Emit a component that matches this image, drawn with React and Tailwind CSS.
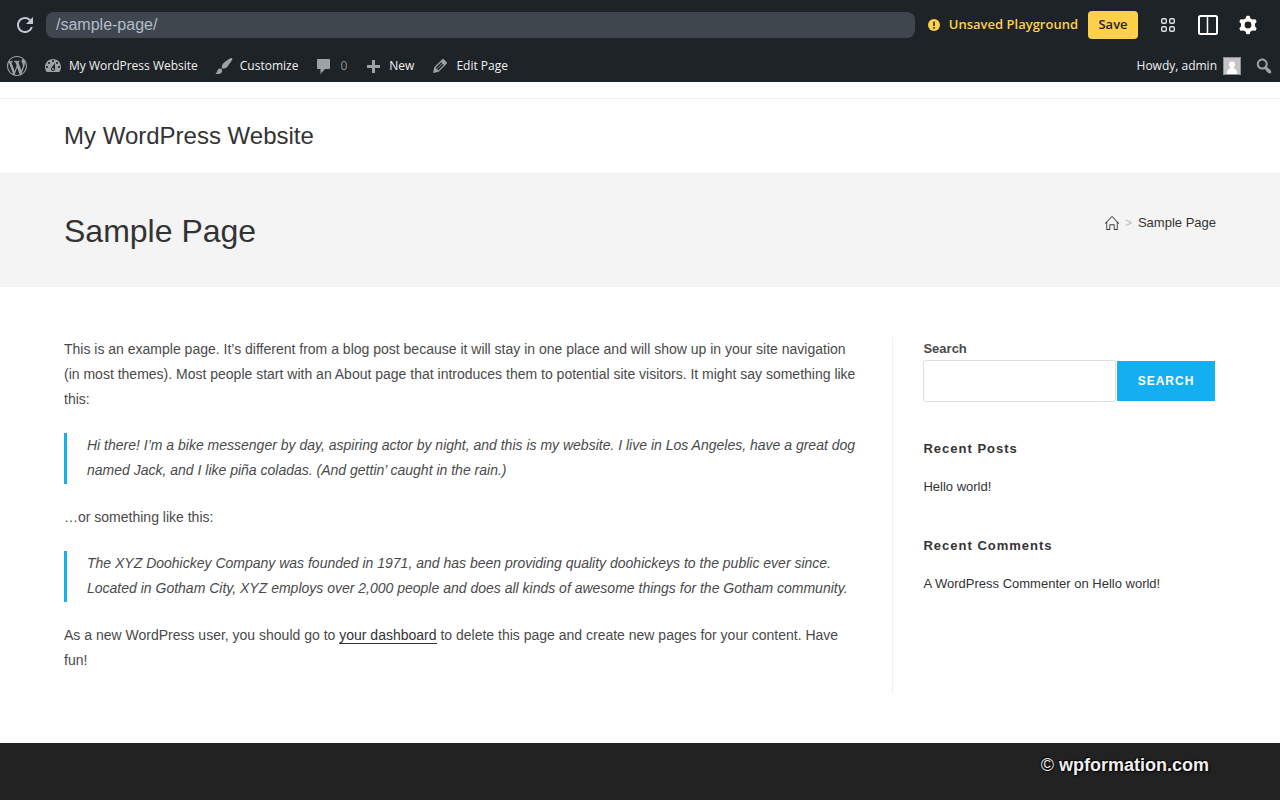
import { useState } from "react";
import { MdRefresh } from "react-icons/md";
import { SlHome } from "react-icons/sl";

const ICONS = {
  wordpress:
    "M20 10c0-5.51-4.49-10-10-10C4.48 0 0 4.49 0 10c0 5.52 4.48 10 10 10 5.51 0 10-4.48 10-10zM7.78 15.37L4.37 6.22c.55-.02 1.17-.08 1.17-.08.5-.06.44-1.13-.06-1.11 0 0-1.45.11-2.37.11-.18 0-.37 0-.58-.01C4.12 2.69 6.87 1.11 10 1.11c2.33 0 4.45.87 6.05 2.34-.68-.11-1.65.39-1.65 1.58 0 .74.45 1.36.9 2.1.35.61.55 1.36.55 2.46 0 1.49-1.4 5-1.4 5l-3.03-8.37c.54-.02.82-.17.82-.17.5-.05.44-1.25-.06-1.22 0 0-1.44.12-2.38.12-.87 0-2.33-.12-2.33-.12-.5-.03-.56 1.2-.06 1.22l.92.08 1.26 3.41zM17.41 10c.24-.64.74-1.87.43-4.25.7 1.29 1.05 2.71 1.05 4.25 0 3.29-1.73 6.24-4.4 7.78.97-2.59 1.94-5.2 2.92-7.78zM6.1 18.09C3.12 16.65 1.11 13.53 1.11 10c0-1.3.23-2.48.72-3.59C3.25 10.3 4.67 14.2 6.1 18.09zm4.03-6.63l2.58 6.98c-.86.29-1.76.45-2.71.45-.79 0-1.57-.11-2.29-.33.81-2.38 1.62-4.74 2.42-7.1z",
  dashboard:
    "M3.76 16h12.48c1.1-1.37 1.76-3.11 1.76-5 0-4.42-3.58-8-8-8s-8 3.58-8 8c0 1.89.66 3.63 1.76 5zM10 4c.55 0 1 .45 1 1s-.45 1-1 1-1-.45-1-1 .45-1 1-1zM6 6c.55 0 1 .45 1 1s-.45 1-1 1-1-.45-1-1 .45-1 1-1zm8 0c.55 0 1 .45 1 1s-.45 1-1 1-1-.45-1-1 .45-1 1-1zm-5.37 5.55L12 7v6c0 1.1-.9 2-2 2s-2-.9-2-2c0-.57.24-1.08.63-1.45zM4 10c.55 0 1 .45 1 1s-.45 1-1 1-1-.45-1-1 .45-1 1-1zm12 0c.55 0 1 .45 1 1s-.45 1-1 1-1-.45-1-1 .45-1 1-1zm-5 3c0-.55-.45-1-1-1s-1 .45-1 1 .45 1 1 1 1-.45 1-1z",
  brush:
    "M18.33 3.57s.27-.8-.31-1.36c-.53-.52-1.22-.24-1.22-.24-.61.3-5.76 3.47-7.67 5.57-.86.96-2.06 3.79-1.09 4.82.92.98 3.96-.17 4.79-1 2.06-2.06 5.21-7.17 5.5-7.79zM1.4 17.65c2.37-1.56 1.46-3.41 3.23-4.64.93-.65 2.22-.62 3.08.29.63.67.8 2.57-.16 3.46-1.57 1.45-4 1.55-6.15.89z",
  comment:
    "M4 3h11c.55 0 1 .45 1 1v8c0 .55-.45 1-1 1h-4l-4.500 5v-5H4c-.55 0-1-.45-1-1V4c0-.55.45-1 1-1z",
  plus: "M17 9v3h-5v5H9v-5H4V9h5V4h3v5h5z",
  edit:
    "M13.89 3.39l2.71 2.72c.46.46.42 1.24.03 1.64l-8.01 8.02-5.56 1.16 1.16-5.58s7.6-7.63 7.99-8.03c.39-.39 1.22-.39 1.68.07zm-2.73 2.79l-5.59 5.61 1.11 1.11 5.54-5.65zm-2.97 8.23l5.58-5.6-1.07-1.08-5.59 5.6z",
  search:
    "M12.14 4.18c1.87 1.87 2.11 4.75.72 6.89.12.1.22.21.36.31.2.16.47.36.81.59.34.24.56.39.66.47.42.31.73.57.94.78.32.32.6.65.84 1 .25.35.44.69.59 1.04.14.35.21.68.18 1-.02.32-.14.59-.36.81s-.49.34-.81.36c-.31.02-.65-.04-.99-.19-.35-.14-.7-.34-1.04-.59-.35-.24-.68-.52-1-.84-.21-.21-.47-.52-.77-.93-.1-.13-.25-.35-.47-.66-.22-.32-.4-.57-.56-.78-.16-.2-.29-.35-.44-.5-2.07 1.09-4.69.76-6.44-.98-2.14-2.15-2.14-5.64 0-7.78 2.15-2.15 5.63-2.15 7.78 0zm-1.41 6.36c1.36-1.37 1.36-3.58 0-4.95-1.37-1.37-3.59-1.37-4.95 0-1.37 1.37-1.37 3.58 0 4.95 1.36 1.37 3.58 1.37 4.95 0z",
};

function AdminIcon({ name }) {
  return (
    <svg
      viewBox="0 0 20 20"
      fill="currentColor"
      aria-hidden="true"
      className="size-5 shrink-0 text-[#9ca2a7]"
    >
      <path d={ICONS[name]} />
    </svg>
  );
}

function GearIcon() {
  return (
    <svg viewBox="0 0 20 20" aria-hidden="true" className="size-5" fill="currentColor">
      <circle cx="10" cy="10" r="5.200" fill="none" stroke="currentColor" strokeWidth="3.600" />
      {[0, 60, 120, 180, 240, 300].map((angle) => (
        <path
          key={angle}
          d="M7.200 4.500L8.300 1.300q.2-.6.800-.6h1.800q.6 0 .8.600l1.100 3.200z"
          transform={`rotate(${angle} 10 10)`}
        />
      ))}
    </svg>
  );
}

function PlaygroundBar() {
  const [path, setPath] = useState("/sample-page/");

  return (
    <div className="flex h-[50px] items-center pr-3 pl-[13px]">
      <button aria-label="Refresh" className="text-[#c0c8d2]">
        <MdRefresh size={24} />
      </button>
      <input
        type="text"
        aria-label="Page path"
        value={path}
        onChange={(e) => setPath(e.target.value)}
        className="ml-[9px] h-[26px] min-w-0 flex-1 rounded-lg bg-[#40464d] px-[10px] font-['Liberation_Sans',Arial,sans-serif] text-base text-[#b1bccb] outline-none"
      />
      <div className="ml-[13px] flex items-center gap-[9px] text-[13px] font-semibold text-[#ffd04a]">
        <svg viewBox="0 0 12 12" aria-hidden="true" className="size-3">
          <circle cx="6" cy="6" r="6" fill="currentColor" />
          <path d="M5 2.500h2v4.500H5zM5 8h2v1.700H5z" fill="#5d5026" />
        </svg>
        <span>Unsaved Playground</span>
      </div>
      <button className="ml-[10px] h-7 w-[50px] rounded bg-[#ffd04a] text-[13px] font-semibold text-[#1e2327]">
        Save
      </button>
      <div className="ml-[10px] flex items-center text-white">
        <button aria-label="Apps" className="flex w-10 justify-center">
          <svg viewBox="0 0 20 20" className="size-5" fill="none" stroke="#dfe1e3" strokeWidth="1.4">
            <rect x="3.700" y="3.700" width="4.600" height="4.600" rx="1.300" />
            <rect x="11.700" y="3.700" width="4.600" height="4.600" rx="1.300" />
            <rect x="3.700" y="11.700" width="4.600" height="4.600" rx="1.300" />
            <rect x="11.700" y="11.700" width="4.600" height="4.600" rx="1.300" />
          </svg>
        </button>
        <button aria-label="Toggle panel" className="flex w-10 justify-center">
          <svg viewBox="0 0 20 20" className="size-5" fill="none" stroke="currentColor" strokeWidth="2">
            <rect x="1" y="1" width="18" height="18" rx="1.500" />
            <path d="M9.500 1v18" strokeWidth="1.500" />
          </svg>
        </button>
        <button aria-label="Settings" className="flex w-10 justify-center">
          <GearIcon />
        </button>
      </div>
    </div>
  );
}

function AdminBar() {
  return (
    <nav className="flex h-8 items-center justify-between pr-[6px] pl-[7px] text-xs text-[#f0f0f1]">
      <div className="flex items-center gap-4">
        <a href="#about" aria-label="About WordPress">
          <AdminIcon name="wordpress" />
        </a>
        <a href="#site" className="flex items-center gap-[6px]">
          <AdminIcon name="dashboard" />
          My WordPress Website
        </a>
        <a href="#customize" className="flex items-center gap-[6px]">
          <AdminIcon name="brush" />
          Customize
        </a>
        <a href="#comments" className="flex items-center gap-[6px] text-[#8d9297]">
          <AdminIcon name="comment" />
          0
        </a>
        <a href="#new" className="flex items-center gap-[6px]">
          <AdminIcon name="plus" />
          New
        </a>
        <a href="#edit" className="flex items-center gap-[6px]">
          <AdminIcon name="edit" />
          Edit Page
        </a>
      </div>
      <div className="flex items-center">
        <a href="#profile" className="flex items-center gap-[6px]">
          Howdy, admin
          <svg viewBox="0 0 18 18" aria-hidden="true" className="size-[18px]">
            <rect width="18" height="18" fill="#8c8f94" />
            <rect x="1" y="1" width="16" height="16" fill="#c5c5c7" />
            <path
              d="M9 4.500c1.900 0 3 1.300 3 3.100 0 1.400-.7 2.500-1.400 3.100.2 1 2.800 1.200 3.400 4.300v2H4v-2c.6-3.100 3.200-3.300 3.400-4.300C6.700 10.100 6 9 6 7.600c0-1.800 1.100-3.100 3-3.100z"
              fill="#fff"
            />
          </svg>
        </a>
        <button aria-label="Search site" className="ml-[13px]">
          <AdminIcon name="search" />
        </button>
      </div>
    </nav>
  );
}

function Quote({ children }) {
  return (
    <blockquote className="border-l-3 border-[#13aff0] pb-px pl-5 italic">
      {children}
    </blockquote>
  );
}

function Article() {
  return (
    <article className="flex w-[72%] flex-col gap-[21px] border-r border-[#f1f1f1] pr-[30px] pb-5 text-sm/[25px] text-[#4a4a4a]">
      <p>
        This is an example page. It’s different from a blog post because it will
        stay in one place and will show up in your site navigation (in most
        themes). Most people start with an About page that introduces them to
        potential site visitors. It might say something like this:
      </p>
      <Quote>
        Hi there! I’m a bike messenger by day, aspiring actor by night, and this
        is my website. I live in Los Angeles, have a great dog named Jack, and I
        like piña coladas. (And gettin’ caught in the rain.)
      </Quote>
      <p>…or something like this:</p>
      <Quote>
        The XYZ Doohickey Company was founded in 1971, and has been providing
        quality doohickeys to the public ever since. Located in Gotham City, XYZ
        employs over 2,000 people and does all kinds of awesome things for the
        Gotham community.
      </Quote>
      <p>
        As a new WordPress user, you should go to{" "}
        <a href="#dashboard" className="border-b border-[#333] text-[#333]">
          your dashboard
        </a>{" "}
        to delete this page and create new pages for your content. Have fun!
      </p>
    </article>
  );
}

function Sidebar() {
  return (
    <aside className="w-[28%] pl-[30px] text-[13px] text-[#333]">
      <form onSubmit={(e) => e.preventDefault()}>
        <label htmlFor="search" className="block text-[13px]/[23px] font-bold text-[#4a4a4a]">
          Search
        </label>
        <div className="flex items-center gap-px">
          <input
            id="search"
            type="search"
            className="h-[42px] min-w-0 flex-1 rounded-[3px] border border-[#ddd] px-3 text-sm outline-none"
          />
          <button className="mr-px h-10 w-[98px] bg-[#13aff0] text-xs font-bold tracking-[1px] text-white">
            SEARCH
          </button>
        </div>
      </form>
      <section className="mt-[37px]">
        <h4 className="text-[13px]/5 font-bold tracking-[1px]">Recent Posts</h4>
        <p className="mt-[18px] leading-5">
          <a href="#hello">Hello world!</a>
        </p>
      </section>
      <section className="mt-[39px]">
        <h4 className="text-[13px]/5 font-bold tracking-[1px]">Recent Comments</h4>
        <p className="mt-[18px] leading-5">
          <a href="#commenter">A WordPress Commenter</a> on{" "}
          <a href="#hello">Hello world!</a>
        </p>
      </section>
    </aside>
  );
}

export default function App() {
  return (
    <div className="flex min-h-screen flex-col bg-white font-['Liberation_Sans',Arial,sans-serif]">
      <div className="bg-[#1e2327] font-['Open_Sans','Segoe_UI',sans-serif]">
        <PlaygroundBar />
        <AdminBar />
      </div>

      <header className="mt-4 border-y border-[#f1f1f1]">
        <div className="mx-auto flex h-[74px] w-[90%] items-center">
          <a href="#home" className="text-2xl text-[#333]">
            My WordPress Website
          </a>
        </div>
      </header>

      <div className="bg-[#f4f4f4]">
        <div className="mx-auto flex h-[113px] w-[90%] items-center justify-between">
          <h1 className="text-[32px] text-[#333]">Sample Page</h1>
          <nav className="mb-4 flex items-center text-[13px] text-[#333]">
            <a href="#home" aria-label="Home">
              <SlHome size={14} />
            </a>
            <span className="mx-[6px] text-xs text-[#bbb]">&gt;</span>
            <a href="#sample-page">Sample Page</a>
          </nav>
        </div>
      </div>

      <main className="mx-auto flex w-[90%] py-[50px]">
        <Article />
        <Sidebar />
      </main>

      <footer className="flex-1 bg-[#222]">
        <p className="px-[71px] pt-2 text-right text-lg text-[#eee] [text-shadow:1px_1px_2px_#000,-1px_-1px_1px_#000]">
          © <span className="font-bold">wpformation.com</span>
        </p>
      </footer>
    </div>
  );
}
